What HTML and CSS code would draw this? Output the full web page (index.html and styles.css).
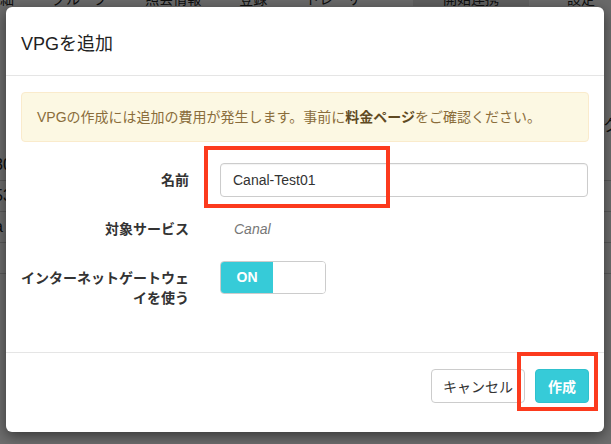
FILE: index.html
```html
<!DOCTYPE html>
<html lang="ja">
<head>
<meta charset="utf-8">
<title>VPGを追加</title>
<link rel="stylesheet" href="styles.css">
</head>
<body>
<div class="page">
  <div class="nav">
    <span>詳細</span><span>グループ</span><span>照会情報</span><span>登録</span><span>トレーサー</span><span class="nav-active">開始連携</span><span>設定</span>
  </div>
  <div class="rows">
    <div class="row">30</div>
    <div class="row">53</div>
    <div class="row">a</div>
    <div class="row"></div>
  </div>
  <div class="side">ク</div>
</div>
<div class="backdrop"></div>

<div class="modal">
  <div class="modal-header">
    <h4 class="modal-title">VPGを追加</h4>
  </div>
  <div class="modal-body">
    <div class="alert">VPGの作成には追加の費用が発生します。事前に<b>料金ページ</b>をご確認ください。</div>
    <div class="form">
      <label class="form-label">名前</label>
      <div class="form-field"><input class="input" type="text" value="Canal-Test01"></div>

      <label class="form-label">対象サービス</label>
      <div class="form-field"><span class="static">Canal</span></div>

      <label class="form-label form-label-multi">インターネットゲートウェ<br>イを使う</label>
      <div class="form-field form-field-top">
        <div class="toggle"><span class="toggle-on">ON</span><span class="toggle-off"></span></div>
      </div>
    </div>
  </div>
  <div class="modal-footer">
    <button class="btn btn-default">キャンセル</button>
    <button class="btn btn-primary">作成</button>
  </div>
  <div class="highlight highlight-name"></div>
  <div class="highlight highlight-create"></div>
</div>
</body>
</html>
```

FILE: styles.css
```css
* { box-sizing: border-box; }
html, body {
  margin: 0;
  padding: 0;
  width: 611px;
  height: 444px;
  overflow: hidden;
}
body {
  font-family: "Liberation Sans", "Noto Sans CJK JP", sans-serif;
  background: #f4f4f4;
  color: #333;
  position: relative;
}

/* underlying page */
.page {
  width: 611px;
  height: 444px;
  background: #fafafa;
}
.nav {
  display: flex;
  gap: 38px;
  height: 30px;
  margin-left: -14px;
  font-size: 14px;
  line-height: 14px;
  color: #222;
  background: #f2f2f2;
  align-items: flex-start;
}
.nav span { margin-top: -8px; }
.nav-active { background: #d8d8d8; padding: 0 30px; }
.rows { margin-top: 120px; margin-left: -6px; }
.row {
  height: 31px;
  border-bottom: 1px solid #ccc;
  font-size: 16px;
  line-height: 30px;
  color: #222;
}
.side {
  position: absolute;
  right: -8px;
  top: 112px;
  font-size: 16px;
  color: #222;
}

.backdrop {
  position: absolute;
  inset: 0;
  background: rgba(0, 0, 0, 0.56);
}

/* modal */
.modal {
  position: absolute;
  left: 6px;
  top: 7px;
  width: 598px;
  height: 425px;
  background: #fff;
  border-radius: 6px;
  box-shadow: 0 4px 14px rgba(0, 0, 0, 0.5);
  display: flex;
  flex-direction: column;
}
.modal-header {
  height: 69px;
  border-bottom: 1px solid #e5e5e5;
  padding: 25px 15px 0;
}
.modal-title {
  margin: 0;
  font-size: 18px;
  line-height: 24px;
  font-weight: normal;
  color: #222;
}
.modal-body {
  padding: 16px 15px 0;
  height: 276px;
}
.alert {
  height: 50px;
  border: 1px solid #faebcc;
  background: #fcf8e3;
  color: #8a6d3b;
  border-radius: 4px;
  padding: 0 15px;
  font-size: 14px;
  line-height: 48px;
  white-space: nowrap;
}
.alert b { color: #5f4a22; }

.form {
  margin-top: 21px;
  display: grid;
  grid-template-columns: 168px 368px;
  column-gap: 31px;
  row-gap: 15px;
}
.form-label {
  font-size: 14px;
  font-weight: bold;
  color: #333;
  text-align: right;
  height: 34px;
  line-height: 34px;
  white-space: nowrap;
}
.form-label-multi {
  height: auto;
  line-height: 20px;
  padding-top: 7px;
}
.form-field {
  height: 34px;
  display: flex;
  align-items: center;
}
.form-field-top { align-items: flex-start; }
.input {
  width: 368px;
  height: 34px;
  border: 1px solid #ccc;
  border-radius: 4px;
  padding: 0 12px;
  font-family: "Liberation Sans", "Noto Sans CJK JP", sans-serif;
  font-size: 14px;
  color: #333;
  outline: none;
  box-shadow: inset 0 1px 1px rgba(0, 0, 0, 0.05);
}
.static {
  font-size: 14px;
  font-style: italic;
  color: #777;
  padding-left: 14px;
}
.toggle {
  width: 106px;
  height: 33px;
  border: 1px solid #ccc;
  border-radius: 4px;
  display: flex;
  overflow: hidden;
}
.toggle-on {
  width: 52px;
  background: #36cbd8;
  color: #fff;
  font-weight: bold;
  font-size: 14px;
  line-height: 31px;
  text-align: center;
}
.toggle-off { flex: 1; background: #fff; }

.modal-footer {
  border-top: 1px solid #e5e5e5;
  padding: 16px 15px 0;
  display: flex;
  justify-content: flex-end;
  gap: 10px;
}
.btn {
  height: 34px;
  border-radius: 4px;
  font-family: "Liberation Sans", "Noto Sans CJK JP", sans-serif;
  font-size: 14px;
  padding: 0 11px;
  white-space: nowrap;
  cursor: pointer;
}
.btn-default {
  background: #fff;
  border: 1px solid #ccc;
  color: #333;
}
.btn-primary {
  background: #36cbd8;
  border: 1px solid #2fc1cd;
  color: #fff;
  font-weight: bold;
  padding: 0 12px;
}

.highlight {
  position: absolute;
  border: 4px solid #fc3a1d;
  pointer-events: none;
}
.highlight-name {
  left: 198px;
  top: 139px;
  width: 186px;
  height: 62px;
}
.highlight-create {
  left: 511px;
  top: 345px;
  width: 81px;
  height: 59px;
}
```
